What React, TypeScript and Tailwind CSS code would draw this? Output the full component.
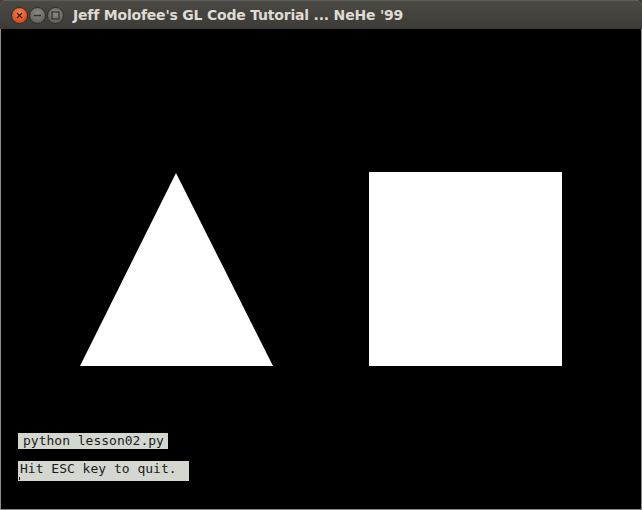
import React from "react";

const TitleButton: React.FC<{ kind: "close" | "min" | "max" }> = ({ kind }) => {
  const base =
    "flex h-[17px] w-[17px] items-center justify-center rounded-full border border-[#2f2e2b]";
  if (kind === "close") {
    return (
      <div className={`${base} bg-[radial-gradient(circle_at_50%_35%,#f58a5f,#e0521f_60%,#c63f12)]`}>
        <svg width="7" height="7" viewBox="0 0 7 7">
          <path d="M1 1 L6 6 M6 1 L1 6" stroke="#3b1a0c" strokeWidth="1.3" />
        </svg>
      </div>
    );
  }
  return (
    <div className={`${base} bg-[radial-gradient(circle_at_50%_35%,#8b8a85,#6a6964_60%,#55544f)]`}>
      {kind === "min" ? (
        <svg width="9" height="9" viewBox="0 0 9 9">
          <path d="M1 4.5 H8" stroke="#33322e" strokeWidth="1.4" />
        </svg>
      ) : (
        <svg width="9" height="9" viewBox="0 0 9 9">
          <rect x="1" y="1" width="7" height="7" fill="none" stroke="#33322e" strokeWidth="1.2" />
        </svg>
      )}
    </div>
  );
};

export default function App() {
  return (
    <div className="h-[510px] w-[642px] overflow-hidden bg-[#3c3b37]">
      <div className="flex h-[510px] w-[642px] flex-col overflow-hidden rounded-t-[6px] bg-[#8c8c8c]">
        {/* title bar */}
        <div className="flex h-[29px] shrink-0 items-center border-t border-[#5d5c57] bg-[linear-gradient(#4a4944,#3c3b37)] pl-[11px]">
          <div className="flex items-center gap-[1px]">
            <TitleButton kind="close" />
            <TitleButton kind="min" />
            <TitleButton kind="max" />
          </div>
          <span className="ml-[9px] whitespace-nowrap font-['DejaVu_Sans',sans-serif] text-[14px] font-bold tracking-[-0.2px] text-[#dfdbd2]">
            Jeff Molofee's GL Code Tutorial ... NeHe '99
          </span>
        </div>

        {/* GL canvas */}
        <div className="mx-[1px] mb-[1px] flex h-[480px] w-[640px] flex-col bg-black">
          <svg width="640" height="400" viewBox="0 0 640 400" className="shrink-0">
            <polygon points="175,144 79,337 272,337" fill="#ffffff" />
            <rect x="368" y="143" width="193" height="194" fill="#ffffff" />
          </svg>

          <div className="ml-[17px] mt-[4px] flex h-[16px] w-[150px] items-center bg-[#d3d7cf] pl-[5px] font-['DejaVu_Sans_Mono',monospace] text-[13px] leading-[16px] text-[#1c1c1c]">
            python lesson02.py
          </div>
          <div className="ml-[17px] mt-[12px] flex h-[20px] w-[171px] flex-col bg-[#d3d7cf] pl-[2px] font-['DejaVu_Sans_Mono',monospace] text-[13px] leading-[16px] text-[#1c1c1c]">
            <span>Hit ESC key to quit.</span>
            <span className="ml-[-1px] mt-[0px] h-[3px] w-[1px] bg-[#1c1c1c]" />
          </div>
        </div>
      </div>
    </div>
  );
}
